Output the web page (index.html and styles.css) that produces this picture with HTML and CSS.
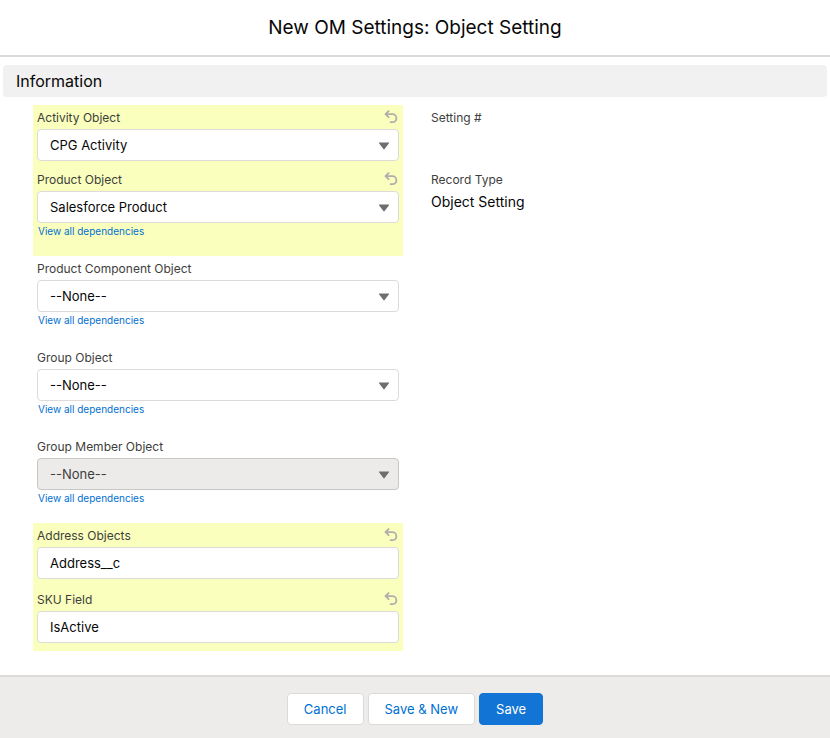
FILE: index.html
```html
<!DOCTYPE html>
<html lang="en">
<head>
<meta charset="utf-8">
<meta name="viewport" content="width=device-width, initial-scale=1">
<title>New OM Settings: Object Setting</title>
<link rel="stylesheet" href="styles.css">
</head>
<body>
<svg width="0" height="0" class="sprite" aria-hidden="true">
  <symbol id="undo" viewBox="0 0 14 14"><path d="M4.600 1.200 1.500 4.200 4.600 7.200M1.800 4.200H8.400a4 4 0 0 1 0 8H6.600" fill="none" stroke="currentColor" stroke-width="1.800" stroke-linecap="round" stroke-linejoin="round"/></symbol>
  <symbol id="down" viewBox="0 0 12 8"><path d="M1.400.5h9.200q1 0 .4.8L6.600 7q-.6.8-1.200 0L1 1.300Q.4.5 1.400.5Z" fill="currentColor"/></symbol>
</svg>
<form class="modal">
  <header class="modal-header"><h1>New OM Settings: Object Setting</h1></header>
  <main class="modal-body">
    <h2 class="section-title">Information</h2>
    <div class="columns">
      <div class="column">
        <div class="field edited">
          <div class="field-head"><label for="activity">Activity Object</label><button type="button" class="undo" aria-label="Undo Activity Object"><svg><use href="#undo"/></svg></button></div>
          <div class="picklist"><select id="activity" class="control"><option>CPG Activity</option></select><svg class="arrow"><use href="#down"/></svg></div>
        </div>
        <div class="field edited dependent">
          <div class="field-head"><label for="product">Product Object</label><button type="button" class="undo" aria-label="Undo Product Object"><svg><use href="#undo"/></svg></button></div>
          <div class="picklist"><select id="product" class="control"><option>Salesforce Product</option></select><svg class="arrow"><use href="#down"/></svg></div>
          <a href="#">View all dependencies</a>
        </div>
        <div class="field dependent">
          <div class="field-head"><label for="component">Product Component Object</label></div>
          <div class="picklist"><select id="component" class="control"><option>--None--</option></select><svg class="arrow"><use href="#down"/></svg></div>
          <a href="#">View all dependencies</a>
        </div>
        <div class="field dependent">
          <div class="field-head"><label for="group">Group Object</label></div>
          <div class="picklist"><select id="group" class="control"><option>--None--</option></select><svg class="arrow"><use href="#down"/></svg></div>
          <a href="#">View all dependencies</a>
        </div>
        <div class="field dependent">
          <div class="field-head"><label for="member">Group Member Object</label></div>
          <div class="picklist"><select id="member" class="control" disabled><option>--None--</option></select><svg class="arrow"><use href="#down"/></svg></div>
          <a href="#">View all dependencies</a>
        </div>
        <div class="field edited text-field">
          <div class="field-head"><label for="address">Address Objects</label><button type="button" class="undo" aria-label="Undo Address Objects"><svg><use href="#undo"/></svg></button></div>
          <input id="address" class="control" type="text" value="Address__c">
        </div>
        <div class="field edited text-field">
          <div class="field-head"><label for="sku">SKU Field</label><button type="button" class="undo" aria-label="Undo SKU Field"><svg><use href="#undo"/></svg></button></div>
          <input id="sku" class="control" type="text" value="IsActive">
        </div>
      </div>
      <dl class="column">
        <div class="field"><dt class="field-head">Setting #</dt><dd></dd></div>
        <div class="field"><dt class="field-head">Record Type</dt><dd>Object Setting</dd></div>
      </dl>
    </div>
  </main>
  <footer class="modal-footer">
    <button type="button" class="button">Cancel</button>
    <button type="button" class="button">Save &amp; New</button>
    <button type="submit" class="button primary">Save</button>
  </footer>
</form>
</body>
</html>
```
FILE: styles.css
```css
* { box-sizing: border-box; }
body {
  margin: 0;
  background: #fff;
  color: #080707;
  font: 13px/20px Inter, "Liberation Sans", sans-serif;
}
h1, h2, dl, dd { margin: 0; font-weight: 400; }
.sprite { position: absolute; }
.modal { display: flex; flex-direction: column; min-height: 100vh; }
.modal-header {
  padding: 16px 16px 15px;
  border-bottom: 2px solid #dddbda;
  text-align: center;
}
.modal-header h1 { font-size: 19px; line-height: 24px; }
.modal-body { flex: 1; padding: 8px 3px 24px; }
.section-title {
  padding: 0 13px;
  border-radius: 4px;
  background: #f1f1f1;
  font-size: 16px;
  line-height: 32px;
}
.columns {
  display: grid;
  grid-template-columns: 1fr 1fr;
  gap: 24px;
  padding: 8px 30px 0;
}
.field { min-height: 62px; padding: 0 4px 6px; }
.edited { background: #faffbd; }
.dependent { min-height: 89px; }
.text-field { padding-bottom: 8px; }
.field-head {
  display: flex;
  justify-content: space-between;
  height: 24px;
  color: #3e3e3c;
  font-size: 12px;
  line-height: 25px;
}
.undo {
  width: 16px;
  height: 24px;
  padding: 0;
  border: 0;
  background: none;
  color: #b0adab;
}
.undo svg { display: block; width: 14px; height: 14px; margin: 0 auto; }
.picklist { position: relative; }
.control {
  display: block;
  width: 100%;
  height: 32px;
  padding: 0 12px;
  border: 1px solid #dddbda;
  border-radius: 4px;
  background: #fff;
  color: #080707;
  font: inherit;
  appearance: none;
}
.control:disabled { border-color: #c9c7c5; background: #ecebea; color: #3e3e3c; opacity: 1; }
.arrow {
  position: absolute;
  top: 13px;
  right: 9px;
  width: 12px;
  height: 8px;
  color: #706e6b;
  pointer-events: none;
}
.field a {
  display: block;
  width: fit-content;
  padding-left: 1px;
  color: #0070d2;
  font-size: 10px;
  line-height: 17px;
  text-decoration: none;
}
dd { font-size: 14px; line-height: 22px; }
.modal-footer {
  display: flex;
  justify-content: center;
  gap: 4px;
  padding: 16px 16px 13px;
  border-top: 2px solid #dddbda;
  background: #eeeceb;
}
.button {
  height: 32px;
  padding: 0 16px;
  border: 1px solid #dddbda;
  border-radius: 4px;
  background: #fff;
  color: #0070d2;
  font: inherit;
}
.primary { border-color: #1274d4; background: #1274d4; color: #fff; }
```
